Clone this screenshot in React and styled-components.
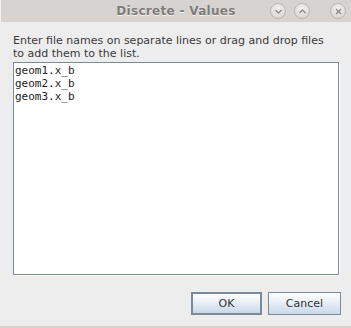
import styled, { createGlobalStyle } from "styled-components";

const Global = createGlobalStyle`
  html, body { margin: 0; padding: 0; background: #ededed; }
  body { width: 351px; height: 328px; overflow: hidden; }
`;

const Frame = styled.div`
  width: 351px;
  height: 328px;
  display: flex;
  flex-direction: column;
  background: #ededed;
  border-bottom: 2px solid #d6d3d0;
  box-sizing: border-box;
`;

const TitleBar = styled.div`
  height: 22px;
  flex: none;
  background: #d6d3d0;
  border-left: 1px solid #f4f2f0;
  position: relative;
  display: flex;
  align-items: center;
  justify-content: center;
`;

const Title = styled.span`
  font-family: "DejaVu Sans", sans-serif;
  font-weight: bold;
  font-size: 12px;
  color: #7e7c79;
  text-shadow: 0 1px 0 #f2f1ef;
  letter-spacing: 0.3px;
`;

const Controls = styled.div`
  position: absolute;
  right: 5px;
  top: 3px;
  display: flex;
  gap: 8px;
`;

const Circle = styled.div`
  width: 16px;
  height: 16px;
  border-radius: 50%;
  background: radial-gradient(circle at 50% 35%, #f3f2f1 0%, #dcdad8 70%, #c9c6c3 100%);
  border: 1px solid #bcb9b5;
  box-sizing: border-box;
  display: flex;
  align-items: center;
  justify-content: center;
  margin-left: ${(p) => (p.$gap ? "12px" : "0")};
`;

const Body = styled.div`
  flex: 1;
  display: flex;
  flex-direction: column;
  padding: 12px 13px 11px 13px;
`;

const Prompt = styled.div`
  font-family: "DejaVu Sans", sans-serif;
  font-size: 11px;
  line-height: 13px;
  color: #3a3a3a;
  margin-bottom: 2px;
`;

const Area = styled.div`
  height: 209px;
  background: #fff;
  border: 1px solid #7a8a99;
  box-shadow: 1px 1px 0 #fff;
  padding: 1px 1px;
  font-family: "DejaVu Sans Mono", monospace;
  font-size: 11px;
  line-height: 13px;
  color: #222;
  margin-right: -1px;
`;

const Buttons = styled.div`
  display: flex;
  justify-content: flex-end;
  gap: 6px;
  margin-top: 17px;
  margin-right: -3px;
`;

const Button = styled.button`
  width: ${(p) => (p.$default ? "71px" : "73px")};
  height: 23px;
  box-sizing: border-box;
  border: ${(p) => (p.$default ? "2px" : "1px")} solid #7a8a99;
  background: linear-gradient(#ffffff 0%, #eef3f8 35%, #c9d8e8 100%);
  font-family: "DejaVu Sans", sans-serif;
  font-size: 11px;
  color: #333;
  padding: 0;
`;

function Chevron({ up }) {
  return (
    <svg width="9" height="9" viewBox="0 0 9 9">
      <path
        d={up ? "M1.5 6 L4.5 3 L7.5 6" : "M1.5 3 L4.5 6 L7.5 3"}
        fill="none"
        stroke="#8d8a86"
        strokeWidth="1.3"
      />
    </svg>
  );
}

function Cross() {
  return (
    <svg width="9" height="9" viewBox="0 0 9 9">
      <path d="M2 2 L7 7 M7 2 L2 7" stroke="#8d8a86" strokeWidth="1.4" />
    </svg>
  );
}

export default function App() {
  return (
    <Frame>
      <Global />
      <TitleBar>
        <Title>Discrete - Values</Title>
        <Controls>
          <Circle><Chevron /></Circle>
          <Circle><Chevron up /></Circle>
          <Circle $gap><Cross /></Circle>
        </Controls>
      </TitleBar>
      <Body>
        <Prompt>
          Enter file names on separate lines or drag and drop files
          <br />
          to add them to the list.
        </Prompt>
        <Area>
          geom1.x_b
          <br />
          geom2.x_b
          <br />
          geom3.x_b
        </Area>
        <Buttons>
          <Button $default>OK</Button>
          <Button>Cancel</Button>
        </Buttons>
      </Body>
    </Frame>
  );
}
